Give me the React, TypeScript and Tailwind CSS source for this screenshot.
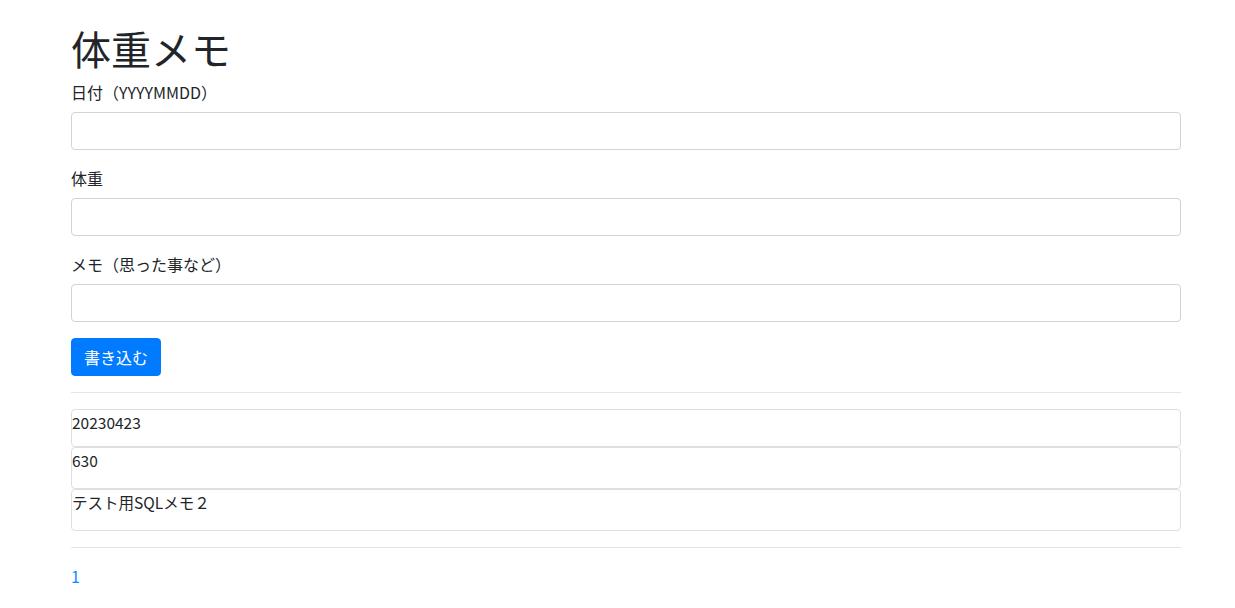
import React from "react";

const font = { fontFamily: '"Segoe UI", "Noto Sans CJK JP", "Noto Sans", sans-serif' };

const fields = [
  { id: "date", label: "日付（YYYYMMDD）" },
  { id: "weight", label: "体重" },
  { id: "memo", label: "メモ（思った事など）" },
];

const entry = [
  { text: "20230423", h: "h-[38px]" },
  { text: "630", h: "h-[42px]" },
  { text: "テスト用SQLメモ２", h: "h-[42px]" },
];

export default function App() {
  return (
    <div className="min-h-screen bg-white text-[#212529]" style={font}>
      <div className="ml-[71px] w-[1110px] pt-[24px]">
        <h1 className="mb-2 text-[40px] leading-[48px] font-normal">体重メモ</h1>

        <form onSubmit={(e) => e.preventDefault()}>
          {fields.map((f) => (
            <div key={f.id} className="mb-4">
              <label htmlFor={f.id} className="mb-2 block text-[16px] leading-6">
                {f.label}
              </label>
              <input
                id={f.id}
                type="text"
                className="block h-[38px] w-full rounded-[4px] border border-[#ced4da] px-3 text-base outline-none"
              />
            </div>
          ))}
          <button
            type="submit"
            className="h-[38px] rounded-[4px] border border-[#007bff] bg-[#007bff] px-3 text-[16px] leading-6 text-white"
          >
            書き込む
          </button>
        </form>

        <hr className="my-4 border-t border-[#e5e5e5]" />

        <div className="flex flex-col">
          {entry.map((e) => (
            <div
              key={e.text}
              className={`${e.h} rounded-[4px] border border-[#dfdfdf] text-[15.5px] leading-6`}
            >
              {e.text}
            </div>
          ))}
        </div>

        <hr className="my-4 border-t border-[#e5e5e5]" />

        <div>
          <a href="#" className="text-[16px] leading-6 text-[#0a8cff]">
            1
          </a>
        </div>
      </div>
    </div>
  );
}
